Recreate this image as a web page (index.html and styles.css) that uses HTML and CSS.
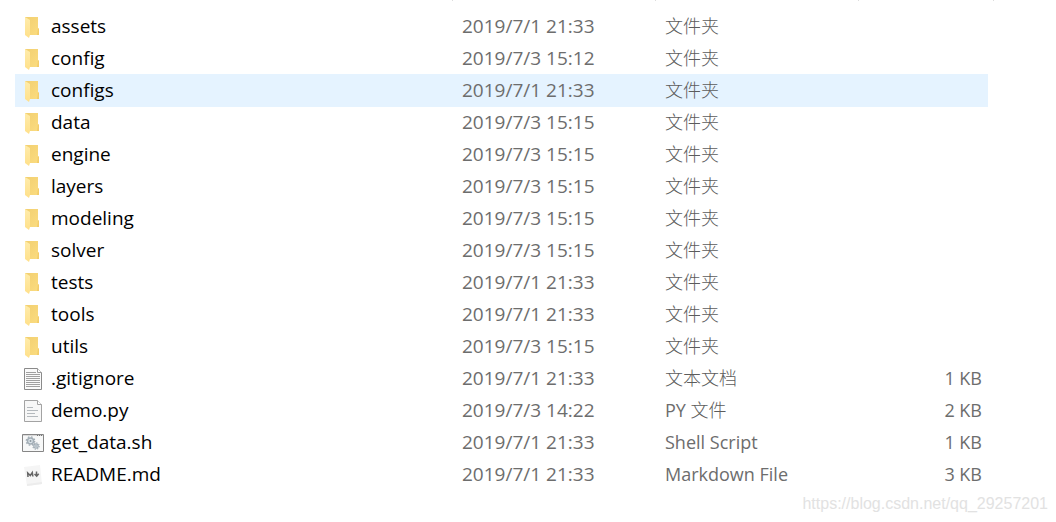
FILE: index.html
```
<!DOCTYPE html>
<html lang="zh-CN">
<head>
  <meta charset="UTF-8">
  <meta name="viewport" content="width=device-width, initial-scale=1.0">
  <title>Files</title>
  <link rel="stylesheet" href="styles.css">
</head>
<body>

<!-- Icons shared by the rows -->
<svg class="icon-defs" width="0" height="0">
  <defs>
    <linearGradient id="folder-back" x1="0" y1="0" x2="1" y2="1">
      <stop offset="0" stop-color="#f2cf70"/>
      <stop offset="1" stop-color="#fbdc80"/>
    </linearGradient>
    <linearGradient id="folder-front" x1="0" y1="0" x2="0" y2="1">
      <stop offset="0" stop-color="#ffecab"/>
      <stop offset="1" stop-color="#ffe08a"/>
    </linearGradient>
  </defs>
  <symbol id="folder" viewBox="0 0 24 24">
    <path d="M4 2H17V13L18 14V20H8L4 18Z" fill="url(#folder-back)"/>
    <path d="M17 13L18 14V20H16Z" fill="#f3cd6a"/>
    <path d="M4 2L9 5V20L8 23L4 20Z" fill="url(#folder-front)"/>
  </symbol>
  <symbol id="text" viewBox="0 0 24 24">
    <path d="M3.500 1.500H16.500L20.500 5.500V22.500H3.500Z" fill="#fafafa" stroke="#8a8a8a"/>
    <path d="M16.500 1.500V5.500H20.500" fill="#fff" stroke="#9a9a9a"/>
    <path d="M5 5.500H15M5 7.500H19M5 9.500H19M5 11.500H19M5 13.500H19M5 15.500H19M5 17.500H19M5 19.500H19" stroke="#a0a0a0"/>
  </symbol>
  <symbol id="python" viewBox="0 0 24 24">
    <path d="M3.500 1.500H16.500L20.500 5.500V22.500H3.500Z" fill="#f7f7f7" stroke="#a3a3a3"/>
    <path d="M16.500 1.500V5.500H20.500" fill="#fff" stroke="#a3a3a3"/>
    <path d="M6 8.500H12M6 11.500H17M6 14.500H14M6 17.500H17" stroke="#b4b9bd"/>
  </symbol>
  <symbol id="shell" viewBox="0 0 24 24">
    <path d="M1.500 3.500H22.500V20.500H1.500Z" fill="#f7f8f8" stroke="#868686"/>
    <path d="M2 4.500H22" stroke="#d9d9d9"/>
    <path d="M16 4.500H17M18 4.500H19M20 4.500H21" stroke="#777"/>
    <circle cx="9.500" cy="10" r="3" fill="#dce5eb" stroke="#a3aeb6" stroke-width="1.500"/>
    <circle cx="9.500" cy="10" r="4.200" fill="none" stroke="#a3aeb6" stroke-width="1.300" stroke-dasharray="1.650 1.650"/>
    <circle cx="9.500" cy="10" r="1" fill="#8d989f"/>
    <circle cx="15" cy="15" r="2.200" fill="#dce5eb" stroke="#a3aeb6" stroke-width="1.200"/>
    <circle cx="15" cy="15" r="3.200" fill="none" stroke="#a3aeb6" stroke-width="1.100" stroke-dasharray="1.250 1.250"/>
    <circle cx="15" cy="15" r=".8" fill="#8d989f"/>
  </symbol>
  <symbol id="markdown" viewBox="0 0 24 24">
    <path d="M3 4L19 2L21 21L6 23Z" fill="#f5f5f5"/>
    <path d="M6 21L21 19V21L6 23Z" fill="#ececec"/>
    <path d="M7 14L6.700 10L9.300 12.500L11.300 9.500L11.900 13.500" fill="none" stroke="#666" stroke-width="1.500"/>
    <path d="M15.500 8.500V13M13.500 11L15.700 13.200L17.700 10.700" fill="none" stroke="#666" stroke-width="1.500"/>
  </symbol>
</svg>

<!-- Bottom edge of the column headings -->
<div class="column-edges">
  <span></span><span></span><span></span><span></span>
</div>

<table class="file-list">
  <colgroup>
    <col>
    <col class="col-date">
    <col class="col-type">
    <col class="col-size">
  </colgroup>
  <tbody>
    <tr><td class="name"><svg class="icon"><use href="#folder"/></svg>assets</td><td class="date">2019/7/1 21:33</td><td><span class="zh">文件夹</span></td><td></td></tr>
    <tr><td class="name"><svg class="icon"><use href="#folder"/></svg>config</td><td class="date">2019/7/3 15:12</td><td><span class="zh">文件夹</span></td><td></td></tr>
    <tr class="hovered"><td class="name"><svg class="icon"><use href="#folder"/></svg>configs</td><td class="date">2019/7/1 21:33</td><td><span class="zh">文件夹</span></td><td></td></tr>
    <tr><td class="name"><svg class="icon"><use href="#folder"/></svg>data</td><td class="date">2019/7/3 15:15</td><td><span class="zh">文件夹</span></td><td></td></tr>
    <tr><td class="name"><svg class="icon"><use href="#folder"/></svg>engine</td><td class="date">2019/7/3 15:15</td><td><span class="zh">文件夹</span></td><td></td></tr>
    <tr><td class="name"><svg class="icon"><use href="#folder"/></svg>layers</td><td class="date">2019/7/3 15:15</td><td><span class="zh">文件夹</span></td><td></td></tr>
    <tr><td class="name"><svg class="icon"><use href="#folder"/></svg>modeling</td><td class="date">2019/7/3 15:15</td><td><span class="zh">文件夹</span></td><td></td></tr>
    <tr><td class="name"><svg class="icon"><use href="#folder"/></svg>solver</td><td class="date">2019/7/3 15:15</td><td><span class="zh">文件夹</span></td><td></td></tr>
    <tr><td class="name"><svg class="icon"><use href="#folder"/></svg>tests</td><td class="date">2019/7/1 21:33</td><td><span class="zh">文件夹</span></td><td></td></tr>
    <tr><td class="name"><svg class="icon"><use href="#folder"/></svg>tools</td><td class="date">2019/7/1 21:33</td><td><span class="zh">文件夹</span></td><td></td></tr>
    <tr><td class="name"><svg class="icon"><use href="#folder"/></svg>utils</td><td class="date">2019/7/3 15:15</td><td><span class="zh">文件夹</span></td><td></td></tr>
    <tr><td class="name"><svg class="icon"><use href="#text"/></svg>.gitignore</td><td class="date">2019/7/1 21:33</td><td><span class="zh">文本文档</span></td><td class="size">1 KB</td></tr>
    <tr><td class="name"><svg class="icon"><use href="#python"/></svg>demo.py</td><td class="date">2019/7/3 14:22</td><td>PY <span class="zh">文件</span></td><td class="size">2 KB</td></tr>
    <tr><td class="name"><svg class="icon"><use href="#shell"/></svg>get_data.sh</td><td class="date">2019/7/1 21:33</td><td>Shell Script</td><td class="size">1 KB</td></tr>
    <tr><td class="name"><svg class="icon"><use href="#markdown"/></svg>README.md</td><td class="date">2019/7/1 21:33</td><td>Markdown File</td><td class="size">3 KB</td></tr>
  </tbody>
</table>

<div class="watermark">https://blog.csdn.net/qq_29257201</div>

</body>
</html>
```
FILE: styles.css
```
* {
  margin: 0;
  padding: 0;
  box-sizing: border-box;
}

body {
  font-family: 'Open Sans', 'Noto Sans CJK SC', sans-serif;
  font-size: 18px;
  color: #6d6d6d;
  background-color: #fff;
  position: relative;
  min-height: 100vh;
}

.icon-defs {
  position: absolute;
}

/* Column separators */
.column-edges {
  display: grid;
  grid-template-columns: 1fr 203px 203px 135px;
  height: 1px;
  margin: 0 62px 9px 15px;
}

.column-edges span {
  border-right: 1px solid #ddd;
}

/* File list */
.file-list {
  width: calc(100% - 83px);
  margin-left: 15px;
  table-layout: fixed;
  border-collapse: collapse;
}

.col-date,
.col-type {
  width: 203px;
}

.col-size {
  width: 130px;
}

.file-list td {
  height: 32px;
  padding-left: 10px;
  line-height: 24px;
  vertical-align: middle;
  white-space: nowrap;
}

.file-list .name {
  padding-left: 6px;
  font-size: 19px;
  color: #000;
}

.file-list .date {
  font-size: 19px;
}

.file-list .size {
  padding-right: 6px;
  text-align: right;
}

.hovered {
  background-color: #e5f3ff;
  box-shadow: 0 1px #e5f3ff;
}

.icon {
  width: 24px;
  height: 24px;
  margin-right: 6px;
  vertical-align: -6px;
}

.zh {
  font-family: 'Noto Sans CJK SC', sans-serif;
  font-weight: 300;
  line-height: 22px;
  color: #5c5c5c;
}

.watermark {
  position: absolute;
  right: 8px;
  bottom: 8px;
  font-family: 'Liberation Sans', Arial, sans-serif;
  font-size: 16px;
  line-height: 20px;
  color: #e2e2e2;
}
```
